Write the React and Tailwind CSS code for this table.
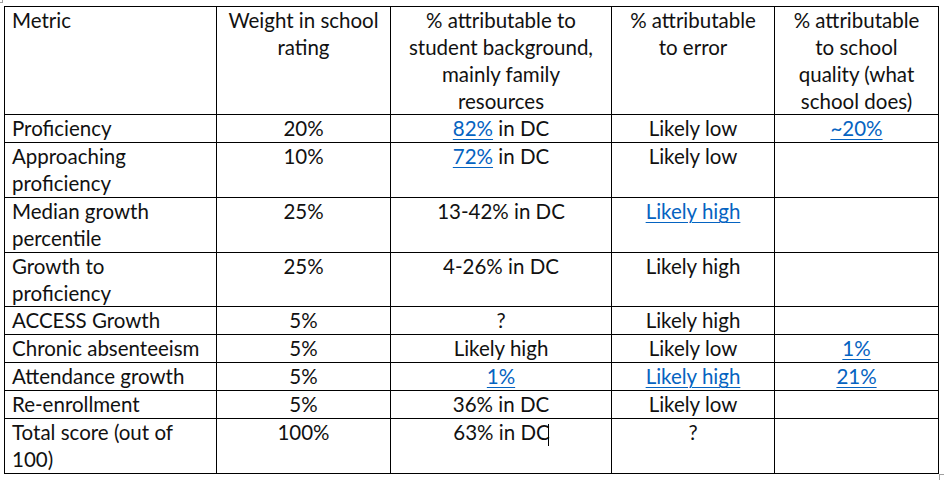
import React from "react";

const L = ({ children }) => (
  <span className="text-[#0563c1] underline decoration-1 underline-offset-[3px]">{children}</span>
);

const header = [
  { lines: ["Metric"], left: true },
  { lines: ["Weight in school", "rating"] },
  { lines: ["% attributable to", "student background,", "mainly family", "resources"] },
  { lines: ["% attributable", "to error"] },
  { lines: ["% attributable", "to school", "quality (what", "school does)"] },
];

const rows = [
  [["Proficiency"], "20%", <><L>82%</L> in DC</>, "Likely low", <L>~20%</L>],
  [["Approaching", "proficiency"], "10%", <><L>72%</L> in DC</>, "Likely low", ""],
  [["Median growth", "percentile"], "25%", "13-42% in DC", <L>Likely high</L>, ""],
  [["Growth to", "proficiency"], "25%", "4-26% in DC", "Likely high", ""],
  [["ACCESS Growth"], "5%", "?", "Likely high", ""],
  [["Chronic absenteeism"], "5%", "Likely high", "Likely low", <L>1%</L>],
  [["Attendance growth"], "5%", <L>1%</L>, <L>Likely high</L>, <L>21%</L>],
  [["Re-enrollment"], "5%", "36% in DC", "Likely low", ""],
  [
    ["Total score (out of", "100)"],
    "100%",
    <>
      63% in DC
      <span className="inline-block w-px h-[22px] bg-black align-[-6px] -ml-[2px]" />
    </>,
    "?",
    "",
  ],
];

const Cell = ({ children, left }) => (
  <div
    className={`border-r border-b border-black px-[7px] ${left ? "text-left" : "text-center"} whitespace-nowrap overflow-hidden`}
  >
    {children}
  </div>
);

export default function App() {
  return (
    <div
      className="relative w-[944px] h-[480px] bg-white text-[#111] text-[20.5px] leading-[27px] pl-[4px] pt-[6px]"
      style={{ fontFamily: "Lato, 'Liberation Sans', sans-serif" }}
    >
      <div className="absolute left-[-5px] top-[-5px] w-[8px] h-[8px] border border-[#a0a0a0]" />
      <div className="absolute left-[939px] top-[474px] w-[8px] h-[8px] border border-[#a0a0a0]" />
      <div className="grid w-[935px] grid-cols-[212px_174px_221px_163px_164px] grid-rows-[108px_28px_55px_55px_54px_28px_28px_28px_28px_55px] border-l border-t border-black">
        {header.map((h, i) => (
          <Cell key={i} left={h.left}>
            {h.lines.map((l, j) => (
              <div key={j}>{l}</div>
            ))}
          </Cell>
        ))}
        {rows.map((r, i) => (
          <React.Fragment key={i}>
            <Cell left>
              {r[0].map((l, j) => (
                <div key={j}>{l}</div>
              ))}
            </Cell>
            <Cell>{r[1]}</Cell>
            <Cell>{r[2]}</Cell>
            <Cell>{r[3]}</Cell>
            <Cell>{r[4]}</Cell>
          </React.Fragment>
        ))}
      </div>
    </div>
  );
}
